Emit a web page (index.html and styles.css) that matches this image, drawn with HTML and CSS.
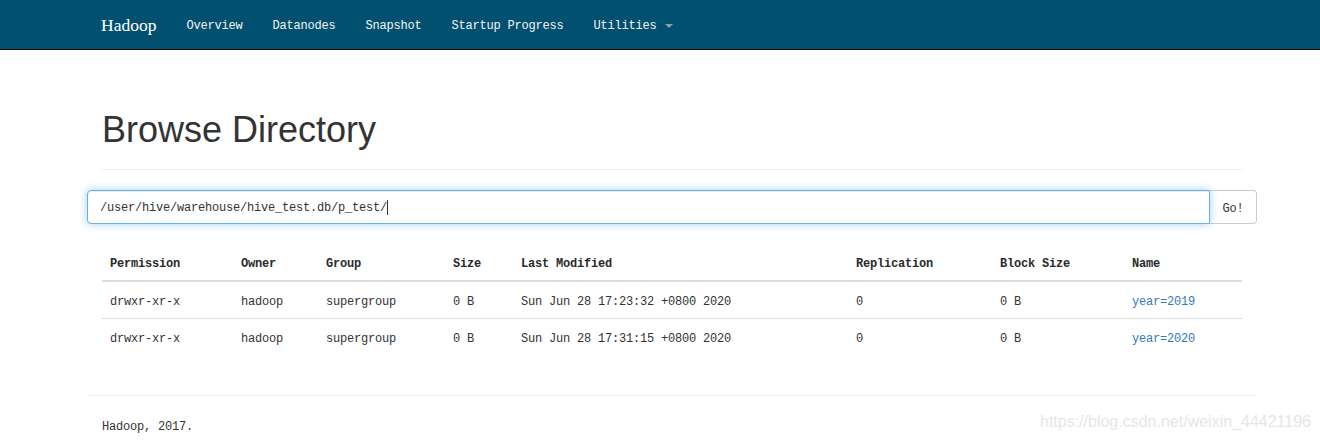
FILE: index.html
```html
<!DOCTYPE html>
<html>
<head>
<meta charset="utf-8">
<title>Browsing HDFS</title>
<link rel="stylesheet" href="styles.css">
</head>
<body>
<header class="navbar">
  <div class="container nav-inner">
    <a class="brand" href="#">Hadoop</a>
    <ul class="nav">
      <li><a href="#">Overview</a></li>
      <li><a href="#">Datanodes</a></li>
      <li><a href="#">Snapshot</a></li>
      <li><a href="#">Startup Progress</a></li>
      <li><a href="#">Utilities <b class="caret"></b></a></li>
    </ul>
  </div>
</header>

<main class="container">
  <div class="page-header">
    <h1>Browse Directory</h1>
  </div>

  <form class="input-group">
    <div class="input-wrap">
      <input class="form-control" type="text" value="/user/hive/warehouse/hive_test.db/p_test/">
      <span class="fake-caret"></span>
    </div>
    <button class="btn" type="button">Go!</button>
  </form>

  <table class="table">
    <colgroup>
      <col class="c-perm"><col class="c-owner"><col class="c-group"><col class="c-size">
      <col class="c-mod"><col class="c-rep"><col class="c-block"><col class="c-name">
    </colgroup>
    <thead>
      <tr>
        <th>Permission</th><th>Owner</th><th>Group</th><th>Size</th>
        <th>Last Modified</th><th>Replication</th><th>Block Size</th><th>Name</th>
      </tr>
    </thead>
    <tbody>
      <tr>
        <td>drwxr-xr-x</td><td>hadoop</td><td>supergroup</td><td>0 B</td>
        <td>Sun Jun 28 17:23:32 +0800 2020</td><td>0</td><td>0 B</td>
        <td><a href="#">year=2019</a></td>
      </tr>
      <tr>
        <td>drwxr-xr-x</td><td>hadoop</td><td>supergroup</td><td>0 B</td>
        <td>Sun Jun 28 17:31:15 +0800 2020</td><td>0</td><td>0 B</td>
        <td><a href="#">year=2020</a></td>
      </tr>
    </tbody>
  </table>

  <hr class="rule">
  <footer class="footer">Hadoop, 2017.</footer>
</main>

<div class="watermark">https://blog.csdn.net/weixin_44421196</div>
</body>
</html>
```

FILE: styles.css
```css
* { box-sizing: border-box; }

html, body {
  margin: 0;
  padding: 0;
  background: #fff;
}

body {
  font-family: "Liberation Mono", "DejaVu Sans Mono", monospace;
  font-size: 12px;
  letter-spacing: -0.2px;
  line-height: 20px;
  color: #333;
  position: relative;
  min-height: 441px;
}

a { text-decoration: none; }

.container {
  width: 1170px;
  margin-left: 87px;
  padding: 0 15px;
}

/* Navbar */
.navbar {
  height: 50px;
  background: #02506f;
  border-bottom: 1px solid #0a0a0a;
}

.nav-inner {
  display: flex;
  align-items: center;
  height: 49px;
}

.brand {
  font-family: "Liberation Serif", "DejaVu Serif", serif;
  font-size: 17.5px;
  letter-spacing: 0;
  color: #fff;
  padding: 1px 15px 0;
  margin-left: -16px;
  line-height: 48px;
}

.nav {
  display: flex;
  list-style: none;
  margin: 0;
  padding: 0;
}

.nav a {
  display: block;
  color: #f4f4f4;
  padding: 3px 15px 0;
  line-height: 46px;
}

.caret {
  display: inline-block;
  width: 0;
  height: 0;
  margin-left: 1px;
  vertical-align: middle;
  border-top: 4px solid #9a9a9a;
  border-left: 4px solid transparent;
  border-right: 4px solid transparent;
}

/* Page header */
.page-header {
  margin: 60px 0 20px;
  padding-bottom: 9px;
  border-bottom: 1px solid #eee;
}

.page-header h1 {
  margin: 0 0 10px;
  font-family: "Liberation Sans", Arial, sans-serif;
  font-weight: 500;
  font-size: 36px;
  letter-spacing: 0;
  line-height: 1.1;
  color: #333;
}

/* Search form */
.input-group {
  display: flex;
  margin: 0 -15px 20px;
  height: 34px;
}

.input-wrap {
  flex: 1;
  position: relative;
  display: flex;
}

.form-control {
  flex: 1;
  height: 34px;
  padding: 7px 12px 5px;
  font: inherit;
  letter-spacing: -0.2px;
  color: #333;
  border: 1px solid #66afe9;
  border-radius: 4px 0 0 4px;
  outline: 0;
  box-shadow: inset 0 1px 1px rgba(0,0,0,.075), 0 0 8px rgba(102,175,233,.6);
}

.fake-caret {
  position: absolute;
  left: 300px;
  top: 10px;
  width: 1px;
  height: 15px;
  background: #333;
}

.btn {
  font: inherit;
  letter-spacing: -0.2px;
  color: #333;
  background: #fff;
  border: 1px solid #ccc;
  border-left: 0;
  border-radius: 0 4px 4px 0;
  padding: 8px 12px 4px;
  height: 34px;
  width: 47px;
}

/* Table */
.table {
  width: 1140px;
  table-layout: fixed;
  border-collapse: collapse;
  margin-bottom: 20px;
}

.c-perm  { width: 131px; }
.c-owner { width: 85px; }
.c-group { width: 127px; }
.c-size  { width: 68px; }
.c-mod   { width: 335px; }
.c-rep   { width: 144px; }
.c-block { width: 132px; }
.c-name  { width: 118px; }

.table th,
.table td {
  padding: 10px 8px 6px;
  text-align: left;
  line-height: 20px;
  white-space: nowrap;
}

.table th {
  font-weight: bold;
  color: #2a2a2a;
  border-bottom: 2px solid #ddd;
}

.table td {
  border-top: 1px solid #ddd;
  vertical-align: top;
}

.table td a { color: #337ab7; }

/* Footer */
.rule {
  margin: 40px -15px 20px;
  border: 0;
  border-top: 1px solid #eee;
}

.footer {
  padding-top: 1px;
  line-height: 20px;
}

.watermark {
  position: absolute;
  right: 9px;
  top: 412px;
  font-family: "Liberation Sans", Arial, sans-serif;
  font-size: 16px;
  letter-spacing: 0;
  color: #e6e6e6;
  line-height: 20px;
}
```
